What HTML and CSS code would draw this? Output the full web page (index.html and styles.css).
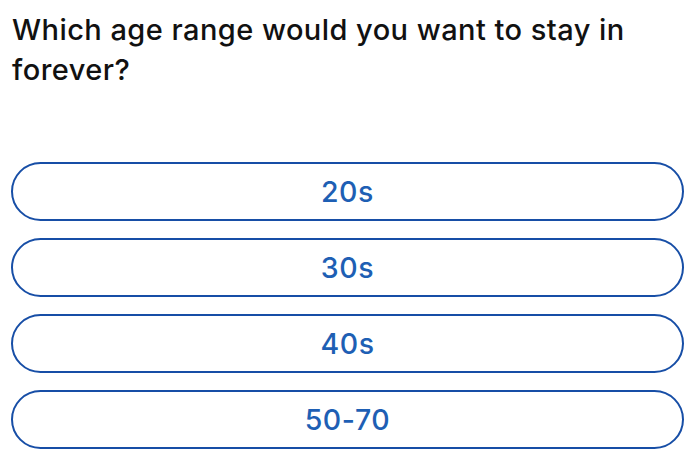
FILE: index.html
```html
<!DOCTYPE html>
<html lang="en">
<head>
  <meta charset="UTF-8">
  <meta name="viewport" content="width=device-width, initial-scale=1.0">
  <title>Poll</title>
  <link rel="stylesheet" href="styles.css">
</head>
<body>
  <div class="poll">
    <h1 class="question">Which age range would you want to stay in forever?</h1>
    <div class="options">
      <button class="option">20s</button>
      <button class="option">30s</button>
      <button class="option">40s</button>
      <button class="option">50-70</button>
    </div>
  </div>
</body>
</html>
```
FILE: styles.css
```css
body {
  margin: 0;
  background: #fff;
  font-family: Inter, "Noto Sans", Arial, sans-serif;
}

.poll {
  padding: 10px 16px 0 11px;
}

.question {
  margin: 0 0 0 1px;
  font-size: 29px;
  font-weight: 500;
  line-height: 40px;
  color: #111;
  letter-spacing: 0.45px;
}

.options {
  display: flex;
  flex-direction: column;
  gap: 17px;
  margin-top: 72px;
}

.option {
  height: 59px;
  border: 2px solid #174ea6;
  border-radius: 30px;
  background: #fff;
  color: #1e5fb4;
  font-family: inherit;
  font-size: 28.5px;
  font-weight: 500;
  letter-spacing: 0.6px;
  cursor: pointer;
}
```
